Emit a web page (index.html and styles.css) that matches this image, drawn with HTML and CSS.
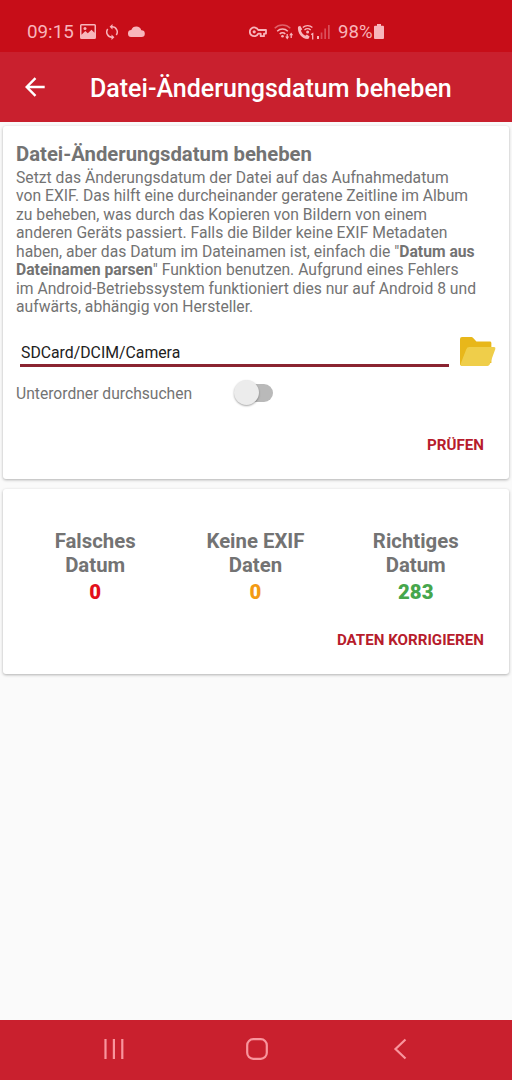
FILE: index.html
```html
<!DOCTYPE html>
<html lang="de">

<head>
    <meta charset="UTF-8">
    <meta name="viewport" content="width=device-width, initial-scale=1.0">
    <title>Datei-Änderungsdatum beheben</title>
    <link rel="stylesheet" href="styles.css">
</head>

<body>
    <div class="statusbar">
        <div class="status-left">
            <span class="clock">09:15</span>
            <svg class="icon-image" width="16" height="15" viewBox="0 0 16 15">
                <path fill-rule="evenodd" d="M1.5 0h13A1.5 1.5 0 0 1 16 1.5v12a1.5 1.5 0 0 1-1.5 1.5h-13A1.5 1.5 0 0 1 0 13.5v-12A1.5 1.5 0 0 1 1.5 0zM1.5 1.5v9.2L5.3 7l2.5 2.3L11.5 5.8l3 3V1.5z" />
                <circle cx="5" cy="4.6" r="1.5" />
            </svg>
            <svg class="icon-sync" width="14" height="16" viewBox="0 0 14 16">
                <path d="M7 2.8a5.2 5.2 0 0 1 4.3 8.2M7 13.2A5.2 5.2 0 0 1 2.7 5" fill="none" stroke="#f8b5bb" stroke-width="1.5" />
                <path d="M7.5 0v5.6L4.6 2.8zM6.5 10.4V16l2.9-2.8z" />
            </svg>
            <svg class="icon-cloud" width="17" height="11" viewBox="0 0 17 11">
                <path d="M3.7 11a3.5 3.5 0 0 1-.4-7A5.3 5.3 0 0 1 13.3 4.2 3.4 3.4 0 0 1 13.5 11z" />
            </svg>
        </div>
        <div class="status-right">
            <svg class="icon-key" width="18" height="12" viewBox="0 0 18 12">
                <path d="M9.2 4A4.4 4.4 0 1 0 9.2 7.6H11.7V10.2H15V7.6H17V4z" fill="none" stroke="#f8b5bb" stroke-width="1.8" stroke-linejoin="round" />
                <circle cx="5.2" cy="5.8" r="1.6" />
            </svg>
            <svg class="icon-wifi" width="20" height="16" viewBox="0 0 20 16">
                <g fill="none" stroke="#f8b5bb" stroke-width="1.5">
                    <path d="M.7 4.2a11.2 11.2 0 0 1 15.6 0" opacity=".5" />
                    <path d="M3.2 7.2a7.6 7.6 0 0 1 10.6 0M5.7 10a4 4 0 0 1 5.6 0" />
                    <path d="M13.2 10v4M17.2 14v-4" stroke-width="1.3" />
                </g>
                <circle cx="8.5" cy="12.3" r="1.3" />
                <path d="M11.2 12.6h4l-2 2.8zM15.2 11.2h4l-2-2.8z" />
            </svg>
            <svg class="icon-call" width="18" height="16" viewBox="0 0 18 16">
                <path d="M1 2.7 3.2 1.8 5.2 5.2 3.9 6.7C4.8 9 6.2 10.5 8.3 11.7L9.9 10.5 12.6 12.5 11.6 14.8C6 15.8 0 9.5 1 2.7z" />
                <g fill="none" stroke="#f8b5bb" stroke-width="1.3">
                    <path d="M5.8 3.5a7 7 0 0 1 9.6 0M7.5 6a4.4 4.4 0 0 1 6.2 0" />
                    <path d="M14.2 10.6l1.5-1v5.9" />
                </g>
                <circle cx="10.6" cy="8" r="1.5" />
            </svg>
            <svg class="icon-signal" width="13" height="15" viewBox="0 0 13 15">
                <path d="M0 12h2v3H0z" />
                <path opacity=".4" d="M3.7 8.5h1.7V15H3.7zM7.3 4.5H9V15H7.3zM11 1h1.7v14H11z" />
            </svg>
            <span class="percent">98%</span>
            <svg class="icon-battery" width="10" height="15" viewBox="0 0 10 15">
                <path d="M3 0h4v1.8h2a1 1 0 0 1 1 1V14a1 1 0 0 1-1 1H1a1 1 0 0 1-1-1V2.8a1 1 0 0 1 1-1h2z" />
            </svg>
        </div>
    </div>

    <header class="toolbar">
        <svg class="back" width="20" height="20" viewBox="0 0 20 20">
            <path d="M19.7 10H1.8M10.5 1.2 1.7 10l8.8 8.8" />
        </svg>
        <h1>Datei-Änderungsdatum beheben</h1>
    </header>

    <main>
        <section class="card settings">
            <h2>Datei-Änderungsdatum beheben</h2>
            <p class="description">
                Setzt das Änderungsdatum der Datei auf das Aufnahmedatum<br>
                von EXIF. Das hilft eine durcheinander geratene Zeitline im Album<br>
                zu beheben, was durch das Kopieren von Bildern von einem<br>
                anderen Geräts passiert. Falls die Bilder keine EXIF Metadaten<br>
                haben, aber das Datum im Dateinamen ist, einfach die "<b>Datum aus<br>
                Dateinamen parsen</b>" Funktion benutzen. Aufgrund eines Fehlers<br>
                im Android-Betriebssystem funktioniert dies nur auf Android 8 und<br>
                aufwärts, abhängig von Hersteller.
            </p>
            <div class="path-row">
                <div class="path-input">SDCard/DCIM/Camera</div>
                <svg class="folder" width="36" height="29" viewBox="0 0 36 29">
                    <path fill="#e8b71a" d="M2 0h9.5a2 2 0 0 1 1.5.7L16.5 4.5h13.5a1.5 1.5 0 0 1 1.5 1.5V26L0 28V2a2 2 0 0 1 2-2z" />
                    <path fill="#efce4a" d="M6.2 12.5Q7 10 9.5 10H34.2Q36 10 35.5 12L29.8 27.5Q29.3 29 27.5 29H1.3Q0 29 .4 27.5z" />
                </svg>
            </div>
            <div class="switch-row">
                <span>Unterordner durchsuchen</span>
                <div class="switch"><div class="thumb"></div></div>
            </div>
            <button class="action">PRÜFEN</button>
        </section>

        <section class="card results">
            <div class="counts">
                <div class="count">Falsches<br>Datum<b class="wrong">0</b></div>
                <div class="count">Keine EXIF<br>Daten<b class="missing">0</b></div>
                <div class="count">Richtiges<br>Datum<b class="correct">283</b></div>
            </div>
            <button class="action">DATEN KORRIGIEREN</button>
        </section>
    </main>

    <nav class="navbar">
        <svg width="22" height="22" viewBox="0 0 22 22">
            <path d="M2.5 1v20M10.9 1v20M19.3 1v20" />
        </svg>
        <svg width="22" height="22" viewBox="0 0 22 22">
            <rect x="1.2" y="1.2" width="19.6" height="19.6" rx="6" />
        </svg>
        <svg width="22" height="22" viewBox="0 0 22 22">
            <path d="M16.5 1.5 6.5 11l10 9.5" />
        </svg>
    </nav>
</body>

</html>
```
FILE: styles.css
```css
* {
    box-sizing: border-box;
}

body {
    display: flex;
    flex-direction: column;
    height: 1080px;
    margin: 0;
    background-color: #fafafa;
    color: #737373;
    font-family: Roboto, sans-serif;
    overflow: hidden;
}

.statusbar {
    display: flex;
    height: 52px;
    padding-top: 12px;
    background-color: #c70d18;
    color: #f8b5bb;
    fill: #f8b5bb;
    font-size: 18.6px;
}

.status-left,
.status-right {
    display: flex;
    align-items: center;
    height: 39px;
}

.status-left {
    width: 249px;
    padding-left: 27px;
}

.clock {
    width: 53px;
    font-size: 18.8px;
}

.icon-sync {
    margin-left: 9px;
}

.icon-cloud {
    margin-left: 9px;
}

.icon-wifi {
    margin-left: 7px;
}

.icon-call {
    margin-left: 3px;
}

.icon-signal {
    margin: 0 8px 0 2px;
}

.percent {
    width: 36px;
}

.toolbar {
    display: flex;
    align-items: center;
    height: 70px;
    padding-left: 25px;
    background-color: #c9202e;
    color: #fff;
}

.back {
    fill: none;
    stroke: #fff;
    stroke-width: 2.4;
}

h1 {
    margin: 2px 0 0 45px;
    font-size: 25px;
    font-weight: 500;
    white-space: nowrap;
}

main {
    display: flex;
    flex: 1;
    flex-direction: column;
    gap: 10px;
    padding: 4px 3px;
}

.card {
    display: flex;
    flex-direction: column;
    background-color: #fff;
    border-radius: 3px;
    box-shadow: 0 1px 3px rgba(0, 0, 0, 0.3);
}

.settings {
    height: 353px;
    padding: 16px 13px 0;
}

h2 {
    margin: 0;
    font-size: 20.3px;
    font-weight: 700;
    line-height: 24px;
}

.description {
    margin: 3px 0 0;
    font-size: 15.7px;
    line-height: 18.43px;
    white-space: nowrap;
}

.path-row {
    display: flex;
    margin-top: 18.5px;
    padding-left: 4px;
}

.path-input {
    width: 431px;
    height: 32px;
    padding: 8px 0 0 1px;
    border-bottom: 3px solid #8a2431;
    color: #212121;
    font-size: 15.8px;
    line-height: 19px;
}

.folder {
    margin: 2px 0 0 11px;
}

.switch-row {
    display: flex;
    align-items: center;
    height: 28px;
    margin-top: 12px;
    font-size: 15.65px;
}

.switch-row span {
    width: 221px;
}

.switch {
    width: 36px;
    height: 18px;
    border-radius: 9px;
    background-color: #b9b9b9;
}

.thumb {
    width: 25px;
    height: 25px;
    margin: -4px 0 0 -3.5px;
    border-radius: 50%;
    background-color: #ececec;
    box-shadow: 0 1px 2px rgba(0, 0, 0, 0.35);
}

.action {
    align-self: flex-end;
    padding: 0;
    border: none;
    background: none;
    color: #b71c2c;
    font-family: inherit;
    font-size: 15.15px;
    font-weight: 700;
    line-height: 20px;
}

.settings .action {
    margin: 28px 12px 0 0;
}

.results {
    height: 185px;
    padding: 40px 13px 0 12px;
}

.counts {
    display: grid;
    grid-template-columns: repeat(3, 160.3px);
}

.count {
    font-size: 20.35px;
    font-weight: 700;
    line-height: 24px;
    text-align: center;
}

.count b {
    display: block;
    margin-top: 3px;
}

.wrong {
    color: #e3101c;
}

.missing {
    color: #f39a14;
}

.correct {
    color: #46a64c;
}

.results .action {
    margin: 26px 12px 0 0;
}

.navbar {
    display: flex;
    justify-content: space-between;
    height: 60px;
    padding: 18px 101px 0 103px;
    background-color: #c9202e;
    fill: none;
    stroke: #f9959d;
    stroke-width: 2.2;
}
```
